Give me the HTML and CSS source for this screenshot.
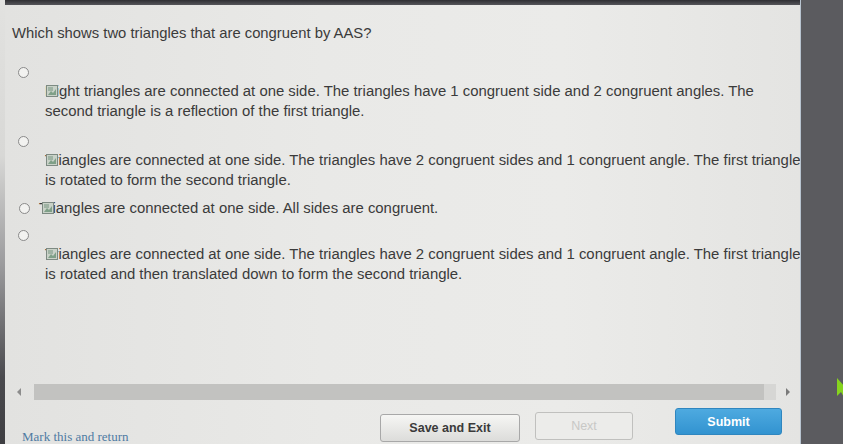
FILE: index.html
```html
<!DOCTYPE html>
<html>
<head>
<meta charset="utf-8">
<link rel="stylesheet" href="styles.css">
</head>
<body>
<div class="screen">
  <div class="edge"></div>
  <div class="main">
    <div class="topbar"></div>
    <div class="content">
      <p class="question">Which shows two triangles that are congruent by AAS?</p>

      <div class="option first">
        <div class="radio-row"><span class="radio"></span></div>
        <div class="answer">
          <span class="broken"><svg width="12" height="12" viewBox="0 0 12 12"><rect x="0.5" y="0.5" width="11" height="11" fill="#c9d2c8" stroke="#7d8a82"/><rect x="2" y="2" width="5" height="4" fill="#9fb3a4"/><path d="M2 10 L5 6 L7 8 L10 4 L10 10 Z" fill="#7fa088"/></svg></span>
          <span class="line">Right triangles are connected at one side. The triangles have 1 congruent side and 2 congruent angles. The</span>
          <span class="line">second triangle is a reflection of the first triangle.</span>
        </div>
      </div>

      <div class="option opt2">
        <div class="radio-row"><span class="radio"></span></div>
        <div class="answer">
          <span class="broken"><svg width="12" height="12" viewBox="0 0 12 12"><rect x="0.5" y="0.5" width="11" height="11" fill="#c9d2c8" stroke="#7d8a82"/><rect x="2" y="2" width="5" height="4" fill="#9fb3a4"/><path d="M2 10 L5 6 L7 8 L10 4 L10 10 Z" fill="#7fa088"/></svg></span>
          <span class="line">Triangles are connected at one side. The triangles have 2 congruent sides and 1 congruent angle. The first triangle</span>
          <span class="line">is rotated to form the second triangle.</span>
        </div>
      </div>

      <div class="option inline">
        <span class="radio"></span>
        <div class="answer">
          <span class="broken"><svg width="12" height="12" viewBox="0 0 12 12"><rect x="0.5" y="0.5" width="11" height="11" fill="#c9d2c8" stroke="#7d8a82"/><rect x="2" y="2" width="5" height="4" fill="#9fb3a4"/><path d="M2 10 L5 6 L7 8 L10 4 L10 10 Z" fill="#7fa088"/></svg></span>
          <span class="line">Triangles are connected at one side. All sides are congruent.</span>
        </div>
      </div>

      <div class="option">
        <div class="radio-row"><span class="radio"></span></div>
        <div class="answer">
          <span class="broken"><svg width="12" height="12" viewBox="0 0 12 12"><rect x="0.5" y="0.5" width="11" height="11" fill="#c9d2c8" stroke="#7d8a82"/><rect x="2" y="2" width="5" height="4" fill="#9fb3a4"/><path d="M2 10 L5 6 L7 8 L10 4 L10 10 Z" fill="#7fa088"/></svg></span>
          <span class="line">Triangles are connected at one side. The triangles have 2 congruent sides and 1 congruent angle. The first triangle</span>
          <span class="line">is rotated and then translated down to form the second triangle.</span>
        </div>
      </div>
    </div>

    <div class="hscroll">
      <span class="arrow left"></span>
      <div class="track"><div class="track-end"></div></div>
      <span class="arrow right"></span>
    </div>

    <div class="actions">
      <div class="mark"><a class="mark-link">Mark this and return</a></div>
      <button class="btn save">Save and Exit</button>
      <button class="btn next">Next</button>
      <button class="btn submit">Submit</button>
    </div>
  </div>
  <div class="side">
    <svg class="cursor" width="10" height="22" viewBox="0 0 10 22"><path d="M1 0 L1 18 L5 14 L9 21 L10 21 L10 10 Z" fill="#86d41e"/></svg>
  </div>
</div>
</body>
</html>
```

FILE: styles.css
```css
html, body {
  margin: 0;
  padding: 0;
  width: 843px;
  height: 444px;
  overflow: hidden;
  background: #e4e4e2;
}

.screen {
  display: flex;
  width: 843px;
  height: 444px;
}

.edge {
  width: 5px;
  flex: none;
  background: linear-gradient(to bottom, #e2e2e0 0%, #d8d8d6 35%, #9a9a9c 60%, #4a4a4e 85%, #3e3e42 100%);
}

.main {
  width: 795px;
  flex: none;
  display: flex;
  flex-direction: column;
  background: linear-gradient(to right, #e2e2e0 0%, #e9e9e7 40%, #ebebe9 70%, #e4e4e2 100%);
  overflow: hidden;
}

.topbar {
  height: 5px;
  flex: none;
  background: linear-gradient(to bottom, #2f2f33, #55555a);
}

.content {
  flex: 1;
  padding-left: 7px;
  font-family: "Liberation Sans", Arial, sans-serif;
  color: #3b3b3b;
  overflow: hidden;
}

.question {
  margin: 19px 0 0 0;
  font-size: 14.8px;
  line-height: 18px;
  white-space: nowrap;
}

.option {
  margin-top: 8px;
}

.option.first {
  margin-top: 21px;
}

.opt2 {
  margin-top: 11px;
}

.radio-row {
  height: 18px;
  display: flex;
  align-items: center;
  padding-left: 6px;
}

.radio {
  display: block;
  width: 9px;
  height: 9px;
  border: 1.5px solid #8a8a8a;
  border-radius: 50%;
  background: #f2f2f0;
  flex: none;
}

.answer {
  position: relative;
  padding-left: 33px;
  font-size: 14.9px;
  line-height: 20px;
}

.line {
  display: block;
  white-space: nowrap;
}

.broken {
  position: absolute;
  left: 34px;
  top: 4px;
  width: 12px;
  height: 12px;
  line-height: 0;
}

.broken svg {
  display: block;
}

.inline {
  display: flex;
  align-items: center;
  height: 20px;
  padding-left: 7px;
}

.inline .answer {
  padding-left: 9px;
}

.inline .broken {
  left: 12px;
  top: 4px;
}

.hscroll {
  height: 16px;
  flex: none;
  display: flex;
  align-items: center;
  padding-left: 12px;
}

.arrow {
  width: 0;
  height: 0;
  border-top: 4px solid transparent;
  border-bottom: 4px solid transparent;
  flex: none;
}

.arrow.left {
  border-right: 4px solid #8c8c8c;
  margin-right: 13px;
}

.arrow.right {
  border-left: 4px solid #7a7a7a;
  margin-left: 10px;
  margin-right: 10px;
}

.track {
  flex: 1;
  height: 16px;
  background: #c2c2c0;
  display: flex;
  justify-content: flex-end;
}

.track-end {
  width: 12px;
  height: 16px;
  background: #d6d6d4;
}

.actions {
  height: 44px;
  flex: none;
  display: flex;
  align-items: flex-start;
  padding-left: 17px;
}

.mark {
  width: 358px;
  flex: none;
  padding-top: 27px;
}

.mark-link {
  font-family: "Liberation Serif", "Times New Roman", serif;
  font-size: 13px;
  color: #4f7ba3;
}

.btn {
  flex: none;
  font-family: "Liberation Sans", Arial, sans-serif;
  font-size: 12.5px;
  font-weight: bold;
  border-radius: 3px;
  padding: 0;
}

.save {
  width: 140px;
  height: 28px;
  margin-top: 14px;
  background: linear-gradient(to bottom, #f6f6f4, #dcdcda);
  border: 1px solid #a8a8a8;
  color: #3a3a3a;
}

.next {
  width: 98px;
  height: 28px;
  margin-top: 12px;
  margin-left: 15px;
  background: #ececea;
  border: 1px solid #c0c0be;
  color: #c8c8c6;
  font-weight: normal;
}

.submit {
  width: 107px;
  height: 27px;
  margin-top: 8px;
  margin-left: 42px;
  background: linear-gradient(to bottom, #4eaae0, #3293d0);
  border: 1px solid #2f86bf;
  color: #ffffff;
}

.side {
  width: 43px;
  flex: none;
  position: relative;
  background: #5b5b5f;
  border-left: 1px solid #b8c4d0;
  box-sizing: border-box;
}

.cursor {
  position: absolute;
  left: 35px;
  top: 378px;
}
```
